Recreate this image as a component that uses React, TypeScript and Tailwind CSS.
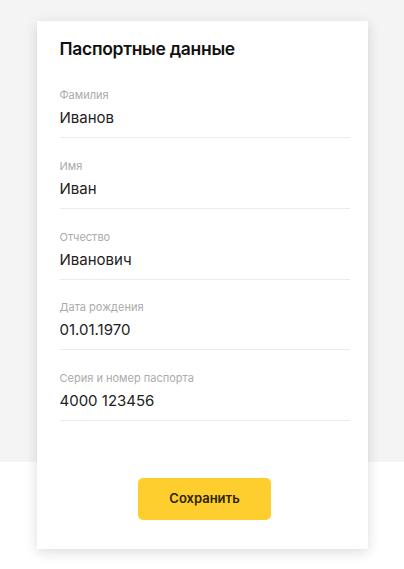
import React from 'react';

const fields = [
    { label: 'Фамилия', value: 'Иванов' },
    { label: 'Имя', value: 'Иван' },
    { label: 'Отчество', value: 'Иванович' },
    { label: 'Дата рождения', value: '01.01.1970' },
    { label: 'Серия и номер паспорта', value: '4000 123456' },
];

const App = () => {
    return (
        <div className="min-h-[569px] w-full bg-[linear-gradient(to_bottom,#f4f4f4_462px,#ffffff_462px)] pt-[21px] pb-5 font-['Inter',sans-serif]">
            <div className="mx-auto w-[331px] bg-white pl-[23px] pr-[18px] pt-[14px] pb-[29px] shadow-[0_3px_12px_rgba(0,0,0,0.14)]">
                {/* Title */}
                <h2 className="text-[17.5px] leading-[28px] font-semibold text-[#111111] tracking-[-0.3px]">
                    Паспортные данные
                </h2>

                {/* Fields */}
                <div className="mt-[24px] flex flex-col gap-[19.75px]">
                    {fields.map((f) => (
                        <div key={f.label} className="border-b border-[#ebebeb] pb-[8px]">
                            <div className="text-[11px] leading-[16px] text-[#ababab]">{f.label}</div>
                            <div className="mt-[4px] text-[15px] leading-[22px] text-[#222222]">{f.value}</div>
                        </div>
                    ))}
                </div>

                {/* Save button */}
                <div className="mt-[57px] flex justify-center">
                    <button className="h-[42px] w-[133px] rounded-[5px] bg-[#fecd2e] text-[13px] font-semibold text-[#2b2300]">
                        Сохранить
                    </button>
                </div>
            </div>
        </div>
    );
};

export default App;
